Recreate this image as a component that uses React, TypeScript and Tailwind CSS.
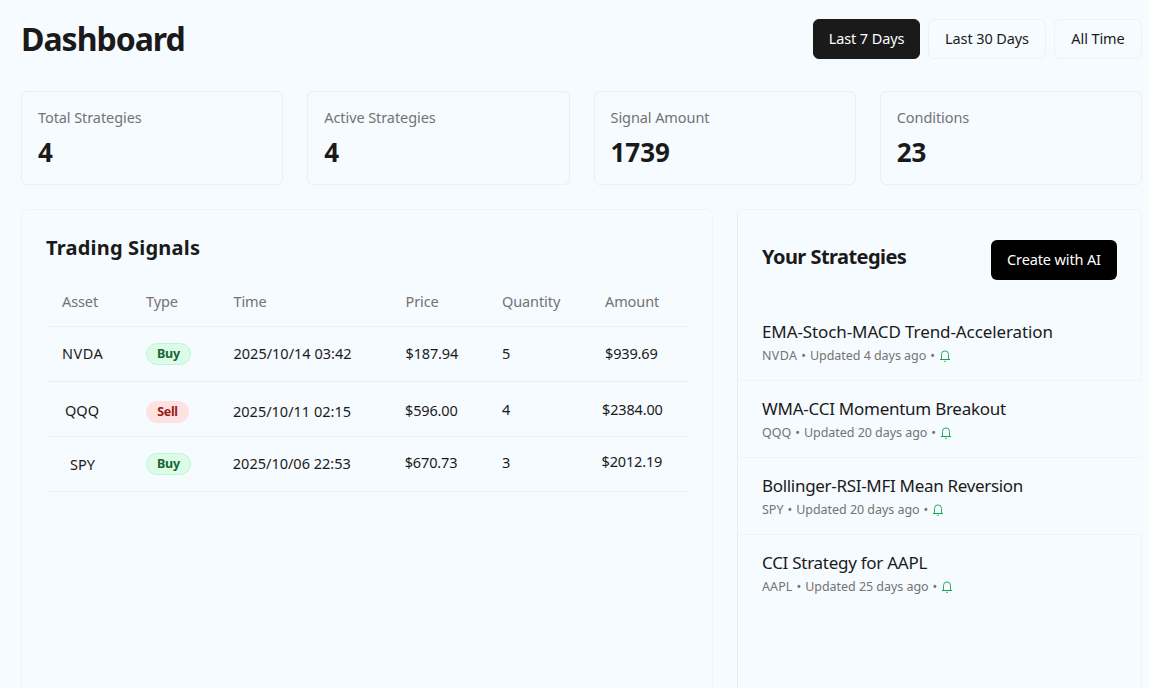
const ranges = [
  { label: "Last 7 Days", active: true, width: "w-[107px]" },
  { label: "Last 30 Days", active: false, width: "w-[118px]" },
  { label: "All Time", active: false, width: "w-[88px]" },
];

const stats = [
  { label: "Total Strategies", value: "4" },
  { label: "Active Strategies", value: "4" },
  { label: "Signal Amount", value: "1739" },
  { label: "Conditions", value: "23" },
];

const columns = ["Asset", "Type", "Time", "Price", "Quantity", "Amount"];

const signals = [
  {
    asset: "NVDA",
    type: "Buy",
    time: "2025/10/14 03:42",
    price: "$187.94",
    quantity: "5",
    amount: "$939.69",
    offsets: ["tracking-[0.5px]", "", "", "", "", "tracking-[-0.15px]"],
  },
  {
    asset: "QQQ",
    type: "Sell",
    time: "2025/10/11 02:15",
    price: "$596.00",
    quantity: "4",
    amount: "$2384.00",
    offsets: ["pl-[3px] pt-1", "pt-[6px]", "-ml-[0.5px] pt-[6px]", "-ml-[0.5px] pt-1", "pt-[2px]", "-ml-[3px] pt-[2px] tracking-[-0.15px]"],
  },
  {
    asset: "SPY",
    type: "Buy",
    time: "2025/10/06 22:53",
    price: "$670.73",
    quantity: "3",
    amount: "$2012.19",
    offsets: ["pl-2 pt-[2px]", "", "-ml-[0.7px]", "-ml-[0.8px] pb-[2px]", "pb-[2px]", "-ml-[3.5px] pb-1 tracking-[-0.15px]"],
  },
];

const strategies = [
  {
    name: "EMA-Stoch-MACD Trend-Acceleration",
    asset: "NVDA",
    updated: "Updated 4 days ago",
    tracking: "tracking-[-0.1px]",
    assetTracking: "tracking-[0.35px]",
    edge: "border-r border-b",
  },
  {
    name: "WMA-CCI Momentum Breakout",
    asset: "QQQ",
    updated: "Updated 20 days ago",
    tracking: "tracking-[-0.26px]",
    assetTracking: "tracking-[0px]",
    edge: "border-b",
  },
  {
    name: "Bollinger-RSI-MFI Mean Reversion",
    asset: "SPY",
    updated: "Updated 20 days ago",
    tracking: "tracking-[-0.31px]",
    assetTracking: "tracking-[0px]",
    edge: "border-b",
  },
  {
    name: "CCI Strategy for AAPL",
    asset: "AAPL",
    updated: "Updated 25 days ago",
    tracking: "tracking-[-0.27px]",
    assetTracking: "tracking-[0.1px]",
    edge: "flex-1 border-r",
  },
];

const rowGrid = "grid grid-cols-[84px_87.5px_172px_96.5px_103px_1fr] items-center border-b border-[#edeff0] pl-4";

function TypeBadge({ type }: { type: string }) {
  return type === "Buy" ? (
    <span className="flex h-[22px] w-[45px] items-center justify-center rounded-full border border-[#bbf7d0] bg-[#dcfce7] text-[12.5px] font-bold tracking-[-0.2px] text-[#166534]">
      {type}
    </span>
  ) : (
    <span className="flex h-[22px] w-[43px] items-center justify-center rounded-full border border-[#fee2e2] bg-[#fee2e2] text-[12.5px] font-bold tracking-[-0.3px] text-[#991b1b]">
      {type}
    </span>
  );
}

function BellIcon() {
  return (
    <svg width="12" height="12" viewBox="0 0 12 12" fill="none" stroke="#16a34a">
      <path d="M2.5 9V4.5a3.5 3.6 0 0 1 7 0V9" strokeWidth="0.9" />
      <path d="M1 9.5h10" strokeWidth="1" />
      <path d="M5 11.3h2" strokeWidth="0.8" />
    </svg>
  );
}

export default function App() {
  return (
    <main className="flex h-[688px] w-[1149px] flex-col overflow-hidden bg-[#f6fbff] pl-[21px] pr-[7px] pt-[19px] font-['Noto_Sans',sans-serif] text-[14.5px] text-[#1a1a1a]">
      {/* Header */}
      <header className="flex h-10 shrink-0 items-center justify-between">
        <h1 className="text-[32px] leading-10 font-bold tracking-[-1px]">Dashboard</h1>
        <div className="flex gap-2">
          {ranges.map((range) => (
            <button
              key={range.label}
              className={`h-10 whitespace-nowrap rounded-md border tracking-[-0.1px] ${range.width} ${
                range.active ? "border-[#1a1a1a] bg-[#1a1a1a] text-white" : "border-[#eff2f3]"
              }`}
            >
              {range.label}
            </button>
          ))}
        </div>
      </header>

      {/* Stats */}
      <div className="mt-8 grid shrink-0 grid-cols-4 gap-6">
        {stats.map((stat) => (
          <div key={stat.label} className="h-[94px] rounded-md border border-[#edeff0] px-4 pt-[15px]">
            <p className="leading-5 tracking-[-0.08px] text-[#737373]">{stat.label}</p>
            <p className="mt-[9px] text-[26px] leading-8 font-bold">{stat.value}</p>
          </div>
        ))}
      </div>

      <div className="mt-6 flex flex-1 gap-6">
        {/* Trading Signals */}
        <section className="w-[692px] rounded-t-md border border-b-0 border-[#f0f4f6] px-6 pt-[23px]">
          <h2 className="text-xl leading-[30px] font-bold tracking-[0.2px]">Trading Signals</h2>
          <div className="mt-[14px] w-[642px]">
            <div className={`${rowGrid} h-[50px] text-[#737373]`}>
              {columns.map((column) => (
                <span key={column} className="tracking-[-0.1px]">
                  {column}
                </span>
              ))}
            </div>
            {signals.map((signal) => (
              <div key={signal.asset} className={`${rowGrid} h-[55px]`}>
                <span className={signal.offsets[0]}>{signal.asset}</span>
                <span className={signal.offsets[1]}>
                  <TypeBadge type={signal.type} />
                </span>
                <span className={signal.offsets[2]}>{signal.time}</span>
                <span className={`tracking-[-0.15px] ${signal.offsets[3]}`}>{signal.price}</span>
                <span className={signal.offsets[4]}>{signal.quantity}</span>
                <span className={signal.offsets[5]}>{signal.amount}</span>
              </div>
            ))}
          </div>
        </section>

        {/* Your Strategies */}
        <section className="flex w-[405px] flex-col rounded-tl-md border-l border-[#e9ecee]">
          <div className="flex h-[95px] shrink-0 justify-between rounded-t-md border-t border-r border-[#f0f4f6] pt-[30px] pr-6 pl-6">
            <h2 className="mt-[2px] text-xl leading-[30px] font-bold tracking-[-0.55px]">Your Strategies</h2>
            <button className="h-10 w-[126px] whitespace-nowrap rounded-md bg-black tracking-[-0.13px] text-white">
              Create with AI
            </button>
          </div>
          {strategies.map((strategy) => (
            <div key={strategy.name} className={`h-[77px] shrink-0 border-[#f0f4f6] px-6 pt-4 ${strategy.edge}`}>
              <p className={`text-[17px] leading-6 ${strategy.tracking}`}>{strategy.name}</p>
              <div className="flex items-center gap-1 text-[12.5px] leading-6 tracking-[-0.04px] text-[#737373]">
                <span className={strategy.assetTracking}>{strategy.asset}</span>
                <span>•</span>
                <span>{strategy.updated}</span>
                <span>•</span>
                <BellIcon />
              </div>
            </div>
          ))}
        </section>
      </div>
    </main>
  );
}
